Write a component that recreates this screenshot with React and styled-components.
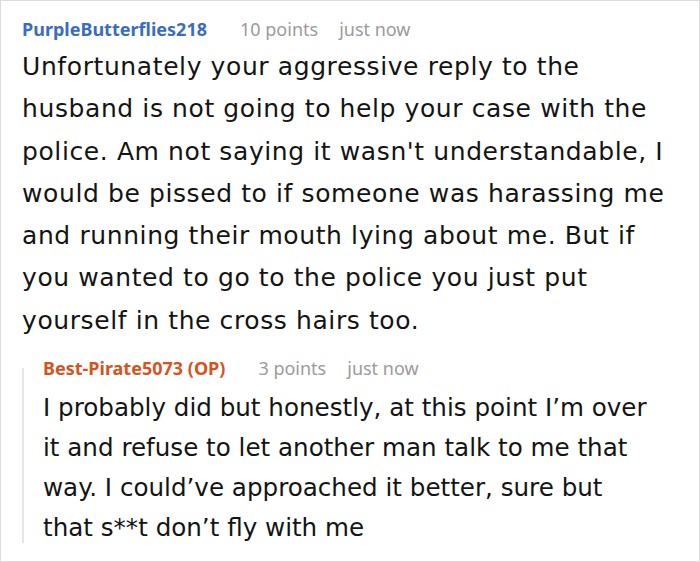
import React from 'react';
import styled, {createGlobalStyle} from 'styled-components';

const GlobalStyle = createGlobalStyle`
  html, body {
    margin: 0;
    padding: 0;
    background: #ffffff;
  }
  body {
    font-family: "Noto Sans", "Open Sans", sans-serif;
  }
`;

const Frame = styled.div`
  box-sizing: border-box;
  width: 700px;
  height: 562px;
  border: 1px solid #dcdcdc;
  background: #fff;
  padding: 16px 20px 0 21px;
  overflow: hidden;
`;

const Comment = styled.div`
  display: flex;
  flex-direction: column;
  flex: 1;
  min-width: 0;
  padding-right: ${props => props.reply ? '26px' : '0'};
`;

const Meta = styled.div`
  display: flex;
  align-items: baseline;
  line-height: 24px;
  font-size: 18px;
  white-space: nowrap;
`;

const Author = styled.span`
  font-weight: 700;
  color: ${props => props.op ? '#d4541e' : '#3a6cbf'};
  margin-right: 33px;
`;

const Info = styled.span`
  color: #9b9b9b;
  margin-right: 21px;
`;

const Body = styled.p`
  margin: ${props => props.reply ? '8px' : '5px'} 0 0;
  font-family: "DejaVu Sans", "Noto Sans", sans-serif;
  font-size: ${props => props.reply ? '24.6px' : '25px'};
  letter-spacing: ${props => props.reply ? '0' : '0.6px'};
  line-height: ${props => props.reply ? '40px' : '42.3px'};
  color: #141414;
`;

const ReplyRow = styled.div`
  display: flex;
  margin-top: 14px;
  gap: 19px;
`;

const ThreadLine = styled.div`
  width: 2px;
  flex: none;
  margin: 12px 0 5px;
  background: #e6e6e6;
`;

export default function App() {
  return (
    <>
      <GlobalStyle />
      <Frame>
        <Comment>
          <Meta>
            <Author>PurpleButterflies218</Author>
            <Info>10 points</Info>
            <Info>just now</Info>
          </Meta>
          <Body>
            Unfortunately your aggressive reply to the husband is not going to help your case with the police. Am not saying it wasn't understandable, I would be pissed to if someone was harassing me and running their mouth lying about me. But if you wanted to go to the police you just put yourself in the cross hairs too.
          </Body>
          <ReplyRow>
            <ThreadLine />
            <Comment reply>
              <Meta>
                <Author op>Best-Pirate5073 (OP)</Author>
                <Info>3 points</Info>
                <Info>just now</Info>
              </Meta>
              <Body reply>
                I probably did but honestly, at this point I’m over it and refuse to let another man talk to me that way. I could’ve approached it better, sure but that s**t don’t fly with me
              </Body>
            </Comment>
          </ReplyRow>
        </Comment>
      </Frame>
    </>
  );
}
